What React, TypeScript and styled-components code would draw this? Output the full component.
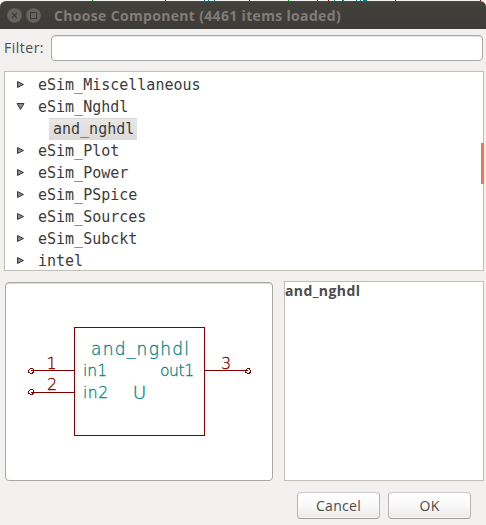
import React from 'react';
import styled, { createGlobalStyle } from 'styled-components';

const Global = createGlobalStyle`
  * { box-sizing: border-box; }
  html, body { margin: 0; padding: 0; overflow: hidden; background: #f2f1f0; }
`;

const uiFont = '"Open Sans", "Noto Sans", sans-serif';

const Dialog = styled.div`
  width: 486px;
  height: 525px;
  display: flex;
  flex-direction: column;
  overflow: hidden;
  background: #f2f1f0;
  color: #4c4c4c;
  font: 14px ${uiFont};
`;

const Backdrop = styled.svg`
  display: block;
  flex: none;
  width: 486px;
  height: 1px;
  background: #f3f3f3;
`;

const TitleBar = styled.header`
  flex: none;
  height: 28px;
  display: flex;
  align-items: center;
  padding-left: 7px;
  gap: 4px;
  border-radius: 6px 6px 0 0;
  background: linear-gradient(#42413c, #3c3b37);
  border-top: 1px solid #4a4943;
`;

const WindowButton = styled.svg`
  display: block;
  width: 15px;
  height: 15px;
`;

const Title = styled.h1`
  margin: 0 0 0 9px;
  font: 700 14px/26px ${uiFont};
  letter-spacing: 0.33px;
  color: #807d78;
  white-space: nowrap;
`;

const FilterRow = styled.label`
  flex: none;
  display: flex;
  align-items: center;
  height: 26px;
  margin: 6px 3px 10px 4px;
`;

const FilterLabel = styled.span`
  width: 47px;
  padding-bottom: 2px;
  letter-spacing: 0.5px;
  white-space: nowrap;
`;

const FilterInput = styled.input`
  flex: 1;
  min-width: 0;
  height: 26px;
  padding: 0 6px;
  border: 1px solid #aba9a5;
  border-radius: 4px;
  background: #fff;
  box-shadow: inset 0 1px 0 #e6e5e4;
  outline: none;
  font: inherit;
`;

const TreeFrame = styled.div`
  flex: none;
  position: relative;
  height: 200px;
  margin: 0 2px 0 4px;
`;

const Tree = styled.ul`
  height: 200px;
  margin: 0;
  padding: 2px 0 0;
  overflow: hidden;
  list-style: none;
  background: #fff;
  border: 1px solid #c1beb8;
  font: 15px/22px "DejaVu Sans Mono", monospace;
  color: #3c3c3c;
`;

const TreeRow = styled.li<{ $child?: boolean }>`
  display: flex;
  align-items: center;
  height: 22px;
  padding-left: ${p => (p.$child ? 44 : 11)}px;
`;

const Arrow = styled.svg`
  display: block;
  flex: none;
  width: 9px;
  height: 9px;
  margin: 0 13px 1px 0;
`;

const Selected = styled.span`
  width: 88px;
  height: 22px;
  padding-left: 4px;
  white-space: nowrap;
  background: linear-gradient(#e8e7e6, #dddbd9);
  border-top: 1px solid #dbd9d7;
  line-height: 20px;
`;

const ScrollThumb = styled.div`
  position: absolute;
  right: 0;
  top: 72px;
  width: 3px;
  height: 41px;
  background: #f07746;
`;

const Details = styled.section`
  flex: none;
  display: grid;
  grid-template-columns: 268px 200px;
  column-gap: 11px;
  align-items: center;
  height: 200px;
  margin: 10px 2px 0 5px;
`;

const Preview = styled.div`
  height: 199px;
  border: 1px solid #aaa8a2;
  border-radius: 4px;
  background: #fff;
  box-shadow: inset 0 1px 0 #dddbd9;
  overflow: hidden;
`;

const Drawing = styled.svg`
  display: block;
  width: 266px;
  height: 197px;
`;

const SymbolText = styled.text<{ $pin?: boolean }>`
  font-family: "DejaVu Sans Light", "DejaVu Sans", sans-serif;
  font-weight: 200;
  fill: ${p => (p.$pin ? '#840000' : '#008484')};
  stroke: ${p => (p.$pin ? '#840000' : '#008484')};
  stroke-width: 0.3px;
`;

const Description = styled.div`
  height: 200px;
  background: #fff;
  border: 1px solid #c1beb8;
  font-weight: 700;
  line-height: 18px;
  letter-spacing: 0.4px;
`;

const Actions = styled.footer`
  flex: none;
  display: flex;
  justify-content: flex-end;
  gap: 8px;
  margin: 11px 15px 0 0;
`;

const Button = styled.button`
  width: 83px;
  height: 27px;
  padding: 0 0 1px;
  border: 1px solid #b7b4b0;
  border-top-color: #cbc8c5;
  border-bottom-color: #9f9d98;
  border-radius: 4px;
  background: linear-gradient(#fff, #fafafa 45%, #ebeae9);
  box-shadow: inset 0 0 0 1px #fff8;
  font: 14px ${uiFont};
  letter-spacing: 0.3px;
  color: #4c4c4c;
`;

const specks: [number, number, string][] = [
  [92, 1, '#00a000'], [165, 1, '#840000'], [204, 1, '#008484'], [208, 1, '#008484'],
  [214, 1, '#008484'], [249, 1, '#840000'], [288, 1, '#00a000'], [317, 1, '#840000'],
  [328, 1, '#840000'], [334, 1, '#008484'], [342, 2, '#008484'], [356, 1, '#008484'],
  [360, 1, '#008484'], [363, 4, '#008484'], [395, 1, '#840000'], [480, 1, '#840000'],
];

const libraries = [
  { name: 'eSim_Miscellaneous' },
  { name: 'eSim_Nghdl', child: 'and_nghdl' },
  { name: 'eSim_Plot' },
  { name: 'eSim_Power' },
  { name: 'eSim_PSpice' },
  { name: 'eSim_Sources' },
  { name: 'eSim_Subckt' },
  { name: 'intel' },
];

// x, baseline, font size, drawn width, text
const labels: [number, number, number, number, string][] = [
  [91, 355, 17, 98, 'and_nghdl'],
  [83, 376, 15.5, 24, 'in1'],
  [83, 398, 15.5, 25, 'in2'],
  [160, 376, 15.5, 34, 'out1'],
  [132.8, 399, 18.5, 13, 'U'],
];
const pinNumbers: [number, number, string][] = [
  [46.5, 369, '1'], [47, 390, '2'], [221, 369, '3'],
];

function ComponentSymbol() {
  return (
    <Drawing viewBox="6 283 266 197">
      <g fill="none" stroke="#840000" shapeRendering="crispEdges">
        <rect x="74.5" y="327.5" width="130" height="108" />
        <path d="M31 370.5H74M31 392.5H74M205 370.5H248" />
        <path d="M30 368.5h3M30 373.5h3M28.5 370v3M33.5 370v3M29 369.5h1M33 369.5h1M29 372.5h1M32 372.5h1" />
        <path d="M30 389.5h3M30 394.5h3M28.5 391v3M33.5 391v3M29 390.5h1M33 390.5h1M29 393.5h1M32 393.5h1" />
        <path d="M247 368.5h3M247 373.5h3M245.5 370v3M250.5 370v3M246 369.5h1M249 369.5h1M246 372.5h1M249 372.5h1" />
      </g>
      {labels.map(([x, y, size, width, text]) => (
        <SymbolText key={text} x={x} y={y} fontSize={size} textLength={width}>{text}</SymbolText>
      ))}
      {pinNumbers.map(([x, y, text]) => (
        <SymbolText key={text} $pin x={x} y={y} fontSize={16}>{text}</SymbolText>
      ))}
    </Drawing>
  );
}

function App() {
  return (
    <>
      <Global />
      <Dialog>
        <Backdrop viewBox="0 0 486 1">
          {specks.map(([x, w, c]) => <rect key={x} x={x} width={w} height="1" fill={c} />)}
        </Backdrop>
        <TitleBar>
          <WindowButton viewBox="0 0 15 15">
            <circle cx="7.5" cy="7.5" r="7.3" fill="#66645e" />
            <path d="M5 5l5 5M10 5l-5 5" stroke="#3c3b37" strokeWidth="1.3" />
          </WindowButton>
          <WindowButton viewBox="0 0 15 15">
            <circle cx="7.5" cy="7.5" r="7.3" fill="#66645e" />
            <rect x="4.5" y="4.5" width="6" height="6" fill="none" stroke="#3c3b37" />
          </WindowButton>
          <Title>Choose Component (4461 items loaded)</Title>
        </TitleBar>
        <FilterRow>
          <FilterLabel>Filter:</FilterLabel>
          <FilterInput />
        </FilterRow>
        <TreeFrame>
          <Tree>
            {libraries.map(({ name, child }) => (
              <React.Fragment key={name}>
                <TreeRow>
                  <Arrow viewBox="0 0 9 9">
                    <path
                      d={child ? 'M1 1.5h7L4.5 7.5z' : 'M1.5 1.5v6L7.5 4.5z'}
                      fill="#8a8a8a"
                      stroke="#3c3c3c"
                    />
                  </Arrow>
                  {name}
                </TreeRow>
                {child && <TreeRow $child><Selected>{child}</Selected></TreeRow>}
              </React.Fragment>
            ))}
          </Tree>
          <ScrollThumb />
        </TreeFrame>
        <Details>
          <Preview><ComponentSymbol /></Preview>
          <Description>and_nghdl</Description>
        </Details>
        <Actions>
          <Button>Cancel</Button>
          <Button>OK</Button>
        </Actions>
      </Dialog>
    </>
  );
}

export default App;
